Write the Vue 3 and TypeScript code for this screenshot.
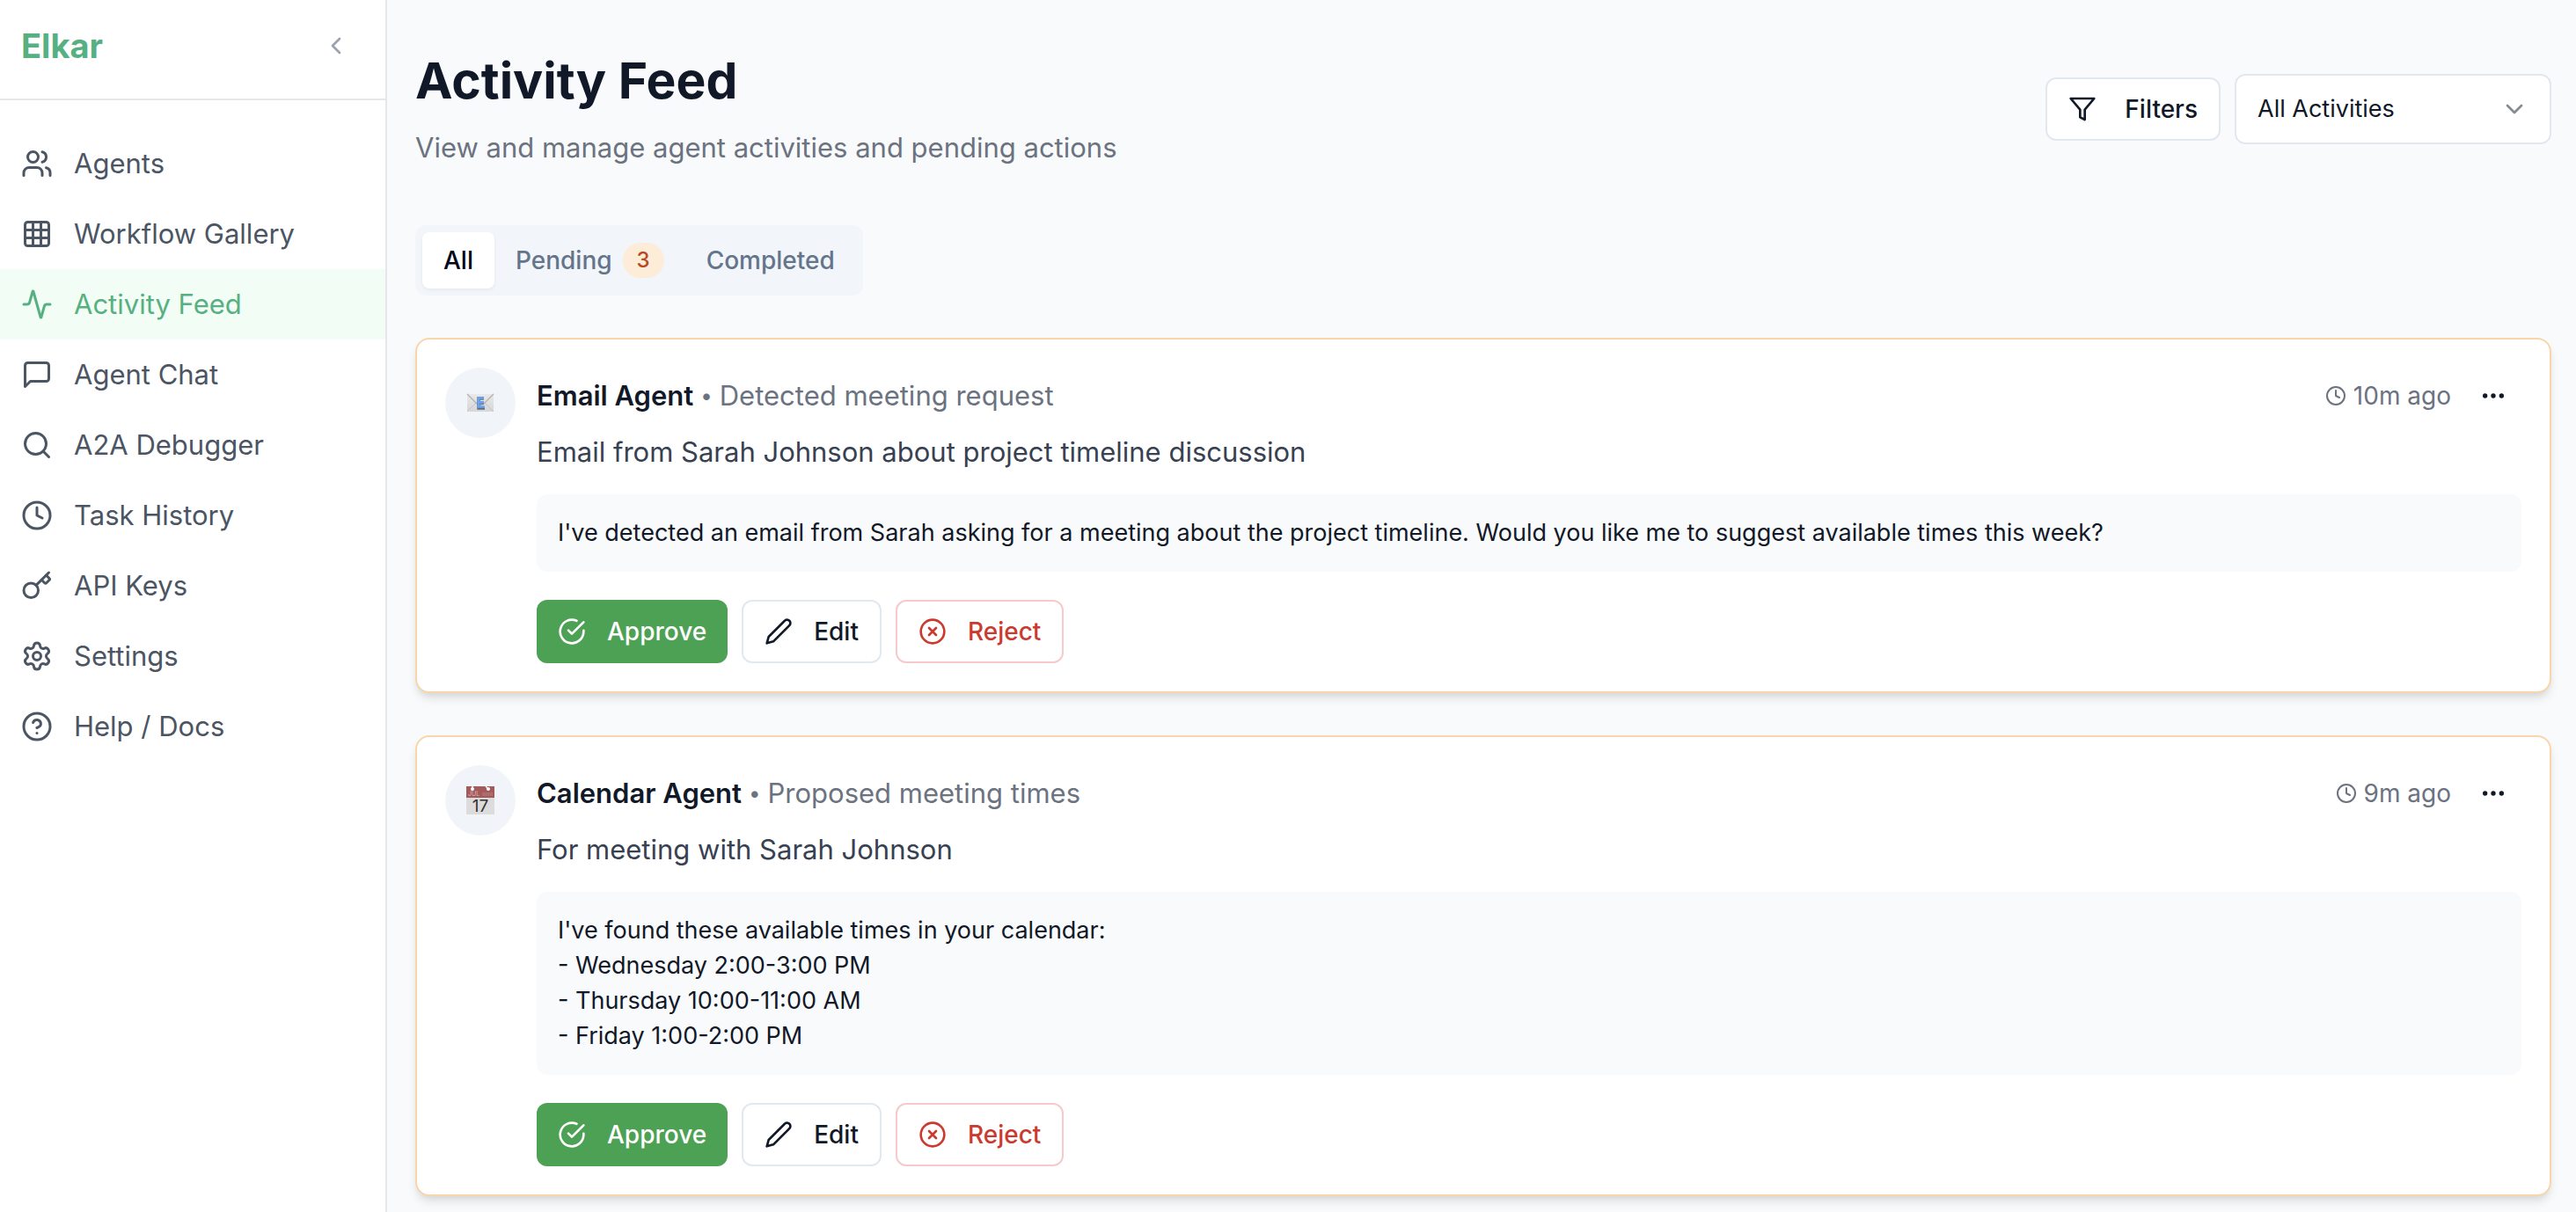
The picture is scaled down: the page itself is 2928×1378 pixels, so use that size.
<script setup lang="ts">
import { ref } from 'vue'

type Shape = { tag: 'path' | 'circle' | 'rect'; attrs: Record<string, string | number> }

const p = (d: string): Shape => ({ tag: 'path', attrs: { d } })
const c = (cx: number, cy: number, r: number): Shape => ({ tag: 'circle', attrs: { cx, cy, r } })

const navItems: { label: string; icon: Shape[] }[] = [
  {
    label: 'Agents',
    icon: [
      p('M16 21v-2a4 4 0 0 0-4-4H6a4 4 0 0 0-4 4v2'),
      c(9, 7, 4),
      p('M22 21v-2a4 4 0 0 0-3-3.87'),
      p('M16 3.13a4 4 0 0 1 0 7.75'),
    ],
  },
  {
    label: 'Workflow Gallery',
    icon: [
      { tag: 'rect', attrs: { x: 3, y: 3, width: 18, height: 18, rx: 2 } },
      p('M3 9h18'),
      p('M3 15h18'),
      p('M9 3v18'),
      p('M15 3v18'),
    ],
  },
  {
    label: 'Activity Feed',
    icon: [
      p('M22 12h-2.48a2 2 0 0 0-1.93 1.46l-2.35 8.36a.25.25 0 0 1-.48 0L9.24 2.18a.25.25 0 0 0-.48 0l-2.35 8.36A2 2 0 0 1 4.49 12H2'),
    ],
  },
  { label: 'Agent Chat', icon: [p('M21 15a2 2 0 0 1-2 2H7l-4 4V5a2 2 0 0 1 2-2h14a2 2 0 0 1 2 2z')] },
  { label: 'A2A Debugger', icon: [c(11, 11, 8), p('m21 21-4.3-4.3')] },
  { label: 'Task History', icon: [c(12, 12, 10), p('M12 6v6l4 2')] },
  {
    label: 'API Keys',
    icon: [
      p('m15.5 7.5 2.3 2.3a1 1 0 0 0 1.4 0l2.1-2.1a1 1 0 0 0 0-1.4L19 4'),
      p('m21 2-9.6 9.6'),
      c(7.5, 15.5, 5.5),
    ],
  },
  {
    label: 'Settings',
    icon: [
      p('M9.671 4.136a2.34 2.34 0 0 1 4.659 0 2.34 2.34 0 0 0 3.319 1.915 2.34 2.34 0 0 1 2.33 4.033 2.34 2.34 0 0 0 0 3.831 2.34 2.34 0 0 1-2.33 4.033 2.34 2.34 0 0 0-3.319 1.915 2.34 2.34 0 0 1-4.659 0 2.34 2.34 0 0 0-3.32-1.915 2.34 2.34 0 0 1-2.33-4.033 2.34 2.34 0 0 0 0-3.831A2.34 2.34 0 0 1 6.35 6.051a2.34 2.34 0 0 0 3.319-1.915'),
      c(12, 12, 3),
    ],
  },
  {
    label: 'Help / Docs',
    icon: [c(12, 12, 10), p('M9.09 9a3 3 0 0 1 5.83 1c0 2-3 3-3 3'), p('M12 17h.01')],
  },
]

const activeNav = ref('Activity Feed')
const tabs = [
  { label: 'All', count: 0 },
  { label: 'Pending', count: 3 },
  { label: 'Completed', count: 0 },
]
const activeTab = ref('All')
const filter = ref('All Activities')

const activities = [
  {
    kind: 'email',
    agent: 'Email Agent',
    action: 'Detected meeting request',
    time: '10m ago',
    description: 'Email from Sarah Johnson about project timeline discussion',
    message:
      "I've detected an email from Sarah asking for a meeting about the project timeline. Would you like me to suggest available times this week?",
  },
  {
    kind: 'calendar',
    agent: 'Calendar Agent',
    action: 'Proposed meeting times',
    time: '9m ago',
    description: 'For meeting with Sarah Johnson',
    message:
      "I've found these available times in your calendar:\n- Wednesday 2:00-3:00 PM\n- Thursday 10:00-11:00 AM\n- Friday 1:00-2:00 PM",
  },
]
</script>

<template>
  <div class="app">
    <aside class="sidebar">
      <div class="brand-row">
        <a class="brand" href="#">Elkar</a>
        <button class="collapse" type="button" aria-label="Collapse sidebar">
          <svg class="icon" viewBox="0 0 24 24"><path d="m15 18-6-6 6-6" /></svg>
        </button>
      </div>
      <nav class="nav">
        <a
          v-for="item in navItems"
          :key="item.label"
          href="#"
          class="nav-item"
          :class="{ active: item.label === activeNav }"
          @click.prevent="activeNav = item.label"
        >
          <svg class="icon nav-icon" viewBox="0 0 24 24">
            <component :is="s.tag" v-for="(s, i) in item.icon" :key="i" v-bind="s.attrs" />
          </svg>
          <span>{{ item.label }}</span>
        </a>
      </nav>
    </aside>

    <main class="main">
      <header class="page-header">
        <div>
          <h1 class="title">Activity Feed</h1>
          <p class="subtitle">View and manage agent activities and pending actions</p>
        </div>
        <div class="controls">
          <button class="btn filters" type="button">
            <svg class="icon" viewBox="0 0 24 24"><path d="M22 3H2l8 9.46V19l4 2v-8.54L22 3z" /></svg>
            <span>Filters</span>
          </button>
          <div class="select-wrap">
            <select v-model="filter" class="select" aria-label="Activity type">
              <option>All Activities</option>
              <option>Email</option>
              <option>Calendar</option>
            </select>
            <svg class="icon chevron" viewBox="0 0 24 24"><path d="m6 9 6 6 6-6" /></svg>
          </div>
        </div>
      </header>

      <div class="tabs" role="tablist">
        <button
          v-for="tab in tabs"
          :key="tab.label"
          type="button"
          role="tab"
          class="tab"
          :class="{ selected: tab.label === activeTab }"
          :aria-selected="tab.label === activeTab"
          @click="activeTab = tab.label"
        >
          <span>{{ tab.label }}</span>
          <span v-if="tab.count" class="count">{{ tab.count }}</span>
        </button>
      </div>

      <section class="feed">
        <article v-for="a in activities" :key="a.agent" class="card">
          <div class="avatar">
            <svg v-if="a.kind === 'email'" class="emoji" viewBox="0 0 32 32">
              <defs>
                <linearGradient id="paper" x1="0" y1="0" x2="0" y2="1">
                  <stop offset="0" stop-color="#e9e9e9" />
                  <stop offset="1" stop-color="#d6d6d6" />
                </linearGradient>
              </defs>
              <rect x="1" y="6" width="30" height="20" fill="url(#paper)" />
              <path d="M1 26l10-10M31 26L21 16" stroke="#c4c4c4" fill="none" />
              <path d="M1 6l11 11q4 3 8 0L31 6" stroke="#b3b3b3" stroke-width="1.4" fill="none" />
              <path d="M20 11h-6v11h7M14 16h6" stroke="#5d6b80" stroke-width="3.4" fill="none" />
              <path d="M20 10.5h-6v10h7M14 15.5h6" stroke="#69a4f4" stroke-width="2.6" fill="none" />
            </svg>
            <svg v-else class="emoji" viewBox="0 0 32 32">
              <rect y="0" width="32" height="13" fill="#a35a5a" />
              <rect y="13" width="32" height="19" fill="#dcdcdc" />
              <circle cx="7" cy="3" r="2" fill="#fff" />
              <circle cx="25" cy="3" r="2" fill="#fff" />
              <path d="M7 3V0M25 3L22 0" stroke="#fff" stroke-width="1.4" />
              <path d="M18 9h12" stroke="#b06b6b" stroke-width="4" />
              <text x="2" y="11" font-size="7" fill="#dcb4b4">JUL</text>
              <text x="16" y="29" font-size="19" text-anchor="middle" fill="#333">17</text>
            </svg>
          </div>

          <div class="body">
            <div class="card-head">
              <div class="headline">
                <h2 class="agent">{{ a.agent }}</h2>
                <span class="action bullet">•</span>
                <span class="action">{{ a.action }}</span>
              </div>
              <div class="meta">
                <span class="time">
                  <svg class="icon small" viewBox="0 0 24 24">
                    <circle cx="12" cy="12" r="10" />
                    <path d="M12 6v6l4 2" />
                  </svg>
                  {{ a.time }}
                </span>
                <button class="more" type="button" aria-label="More actions">
                  <svg class="icon" viewBox="0 0 24 24">
                    <circle cx="12" cy="12" r="1" />
                    <circle cx="19" cy="12" r="1" />
                    <circle cx="5" cy="12" r="1" />
                  </svg>
                </button>
              </div>
            </div>
            <p class="description">{{ a.description }}</p>
            <p class="message">{{ a.message }}</p>
            <div class="actions">
              <button class="btn approve" type="button">
                <svg class="icon" viewBox="0 0 24 24">
                  <path d="M22 11.08V12a10 10 0 1 1-5.93-9.14" />
                  <path d="m9 11 3 3L22 4" />
                </svg>
                <span>Approve</span>
              </button>
              <button class="btn" type="button">
                <svg class="icon" viewBox="0 0 24 24">
                  <path d="M17 3a2.85 2.83 0 1 1 4 4L7.5 20.5 2 22l1.5-5.5Z" />
                </svg>
                <span>Edit</span>
              </button>
              <button class="btn reject" type="button">
                <svg class="icon" viewBox="0 0 24 24">
                  <circle cx="12" cy="12" r="10" />
                  <path d="m15 9-6 6M9 9l6 6" />
                </svg>
                <span>Reject</span>
              </button>
            </div>
          </div>
        </article>
      </section>
    </main>
  </div>
</template>

<style>
body {
  margin: 0;
  background: #f9fafc;
}
</style>

<style scoped>
.app,
.app * {
  box-sizing: border-box;
}

.app {
  display: flex;
  min-height: 100vh;
  font-family: Inter, 'Liberation Sans', sans-serif;
  font-size: 31px;
  line-height: 48px;
  color: #111827;
  background: #f9fafc;
}

button,
select {
  font: inherit;
  color: inherit;
  cursor: pointer;
}

h1,
h2,
p {
  margin: 0;
}

.icon {
  flex: none;
  width: 32px;
  height: 32px;
  fill: none;
  stroke: currentColor;
  stroke-width: 2;
  stroke-linecap: round;
  stroke-linejoin: round;
}

/* Sidebar */
.sidebar {
  flex: none;
  width: 440px;
  background: #fff;
  border-right: 2px solid #e5e7eb;
}

.brand-row {
  display: flex;
  align-items: center;
  justify-content: space-between;
  padding: 24px 24px 32px;
  border-bottom: 2px solid #e5e7eb;
}

.brand {
  font-size: 38px;
  line-height: 56px;
  font-weight: 700;
  color: #57b081;
  text-decoration: none;
}

.collapse {
  display: flex;
  padding: 8px 16px;
  border: 0;
  background: none;
  color: #9ca3af;
}

.nav {
  display: flex;
  flex-direction: column;
  padding: 32px 0;
}

.nav-item {
  display: flex;
  align-items: center;
  gap: 24px;
  padding: 16px 24px;
  color: #4b5563;
  text-decoration: none;
}

.nav-item.active {
  color: #57b081;
  background: #f2fdf5;
}

.nav-icon {
  width: 36px;
  height: 36px;
}

/* Page */
.main {
  flex: 1;
  min-width: 0;
  padding: 56px 28px 16px 32px;
}

.page-header {
  display: flex;
  align-items: center;
  justify-content: space-between;
  margin-bottom: 64px;
}

.title {
  margin-bottom: 16px;
  font-size: 57px;
  line-height: 72px;
  font-weight: 700;
}

.subtitle {
  color: #6b7280;
}

.controls {
  display: flex;
  align-items: center;
  gap: 16px;
}

.btn {
  display: flex;
  align-items: center;
  gap: 24px;
  padding: 14px 24px;
  font-size: 28px;
  line-height: 40px;
  font-weight: 500;
  background: #fff;
  border: 2px solid #e2e8f0;
  border-radius: 12px;
}

.filters {
  gap: 32px;
}

.select-wrap {
  position: relative;
  display: flex;
  width: 360px;
}

.select {
  width: 100%;
  height: 80px;
  padding: 0 64px 0 24px;
  font-size: 27px;
  line-height: 40px;
  appearance: none;
  background: #fff;
  border: 2px solid #e2e8f0;
  border-radius: 12px;
}

.chevron {
  position: absolute;
  top: 24px;
  right: 26px;
  opacity: 0.5;
  pointer-events: none;
}

.tabs {
  display: inline-flex;
  padding: 8px;
  margin-bottom: 48px;
  background: #f2f5fa;
  border-radius: 12px;
}

.tab {
  display: flex;
  align-items: center;
  gap: 12px;
  padding: 12px 24px;
  font-size: 28px;
  line-height: 40px;
  font-weight: 500;
  color: #64748b;
  background: none;
  border: 0;
  border-radius: 8px;
}

.tab.selected {
  color: #020817;
  background: #fff;
  box-shadow: 0 2px 4px rgba(0, 0, 0, 0.05);
}

.count {
  padding: 0 16px;
  font-size: 24px;
  color: #b8481f;
  background: #fdecd8;
  border-radius: 20px;
}

/* Feed */
.feed {
  display: flex;
  flex-direction: column;
  gap: 48px;
}

.card {
  display: flex;
  gap: 24px;
  padding: 32px;
  background: #fff;
  border: 2px solid #f8d6a9;
  border-radius: 16px;
  box-shadow:
    0 8px 12px -2px rgba(0, 0, 0, 0.1),
    0 4px 8px -4px rgba(0, 0, 0, 0.1);
}

.avatar {
  display: flex;
  flex: none;
  align-items: center;
  justify-content: center;
  width: 80px;
  height: 80px;
  background: #f1f5f9;
  border-radius: 50%;
}

.emoji {
  width: 32px;
  height: 32px;
  overflow: visible;
}

.body {
  flex: 1;
  min-width: 0;
}

.card-head {
  display: flex;
  align-items: center;
  justify-content: space-between;
  margin-bottom: 8px;
}

.headline {
  display: flex;
  gap: 8px;
}

.agent {
  font-size: 31px;
  font-weight: 600;
}

.action {
  color: #6b7280;
}

.bullet {
  font-size: 24px;
}

.meta {
  display: flex;
  align-items: center;
  gap: 16px;
}

.time {
  display: flex;
  align-items: center;
  gap: 8px;
  font-size: 28px;
  line-height: 40px;
  color: #6b7280;
}

.small {
  width: 24px;
  height: 24px;
}

.more {
  display: flex;
  padding: 16px;
  border: 0;
  background: none;
}

.description {
  margin-bottom: 24px;
  color: #374151;
}

.message {
  padding: 24px;
  margin-bottom: 32px;
  font-size: 27px;
  line-height: 40px;
  white-space: pre-line;
  background: #f9fafc;
  border-radius: 12px;
}

.actions {
  display: flex;
  gap: 16px;
}

.approve {
  padding: 16px 24px;
  color: #fff;
  background: #4da154;
  border: 0;
}

.reject {
  color: #cb3a2f;
  border-color: #f6caca;
}
</style>
